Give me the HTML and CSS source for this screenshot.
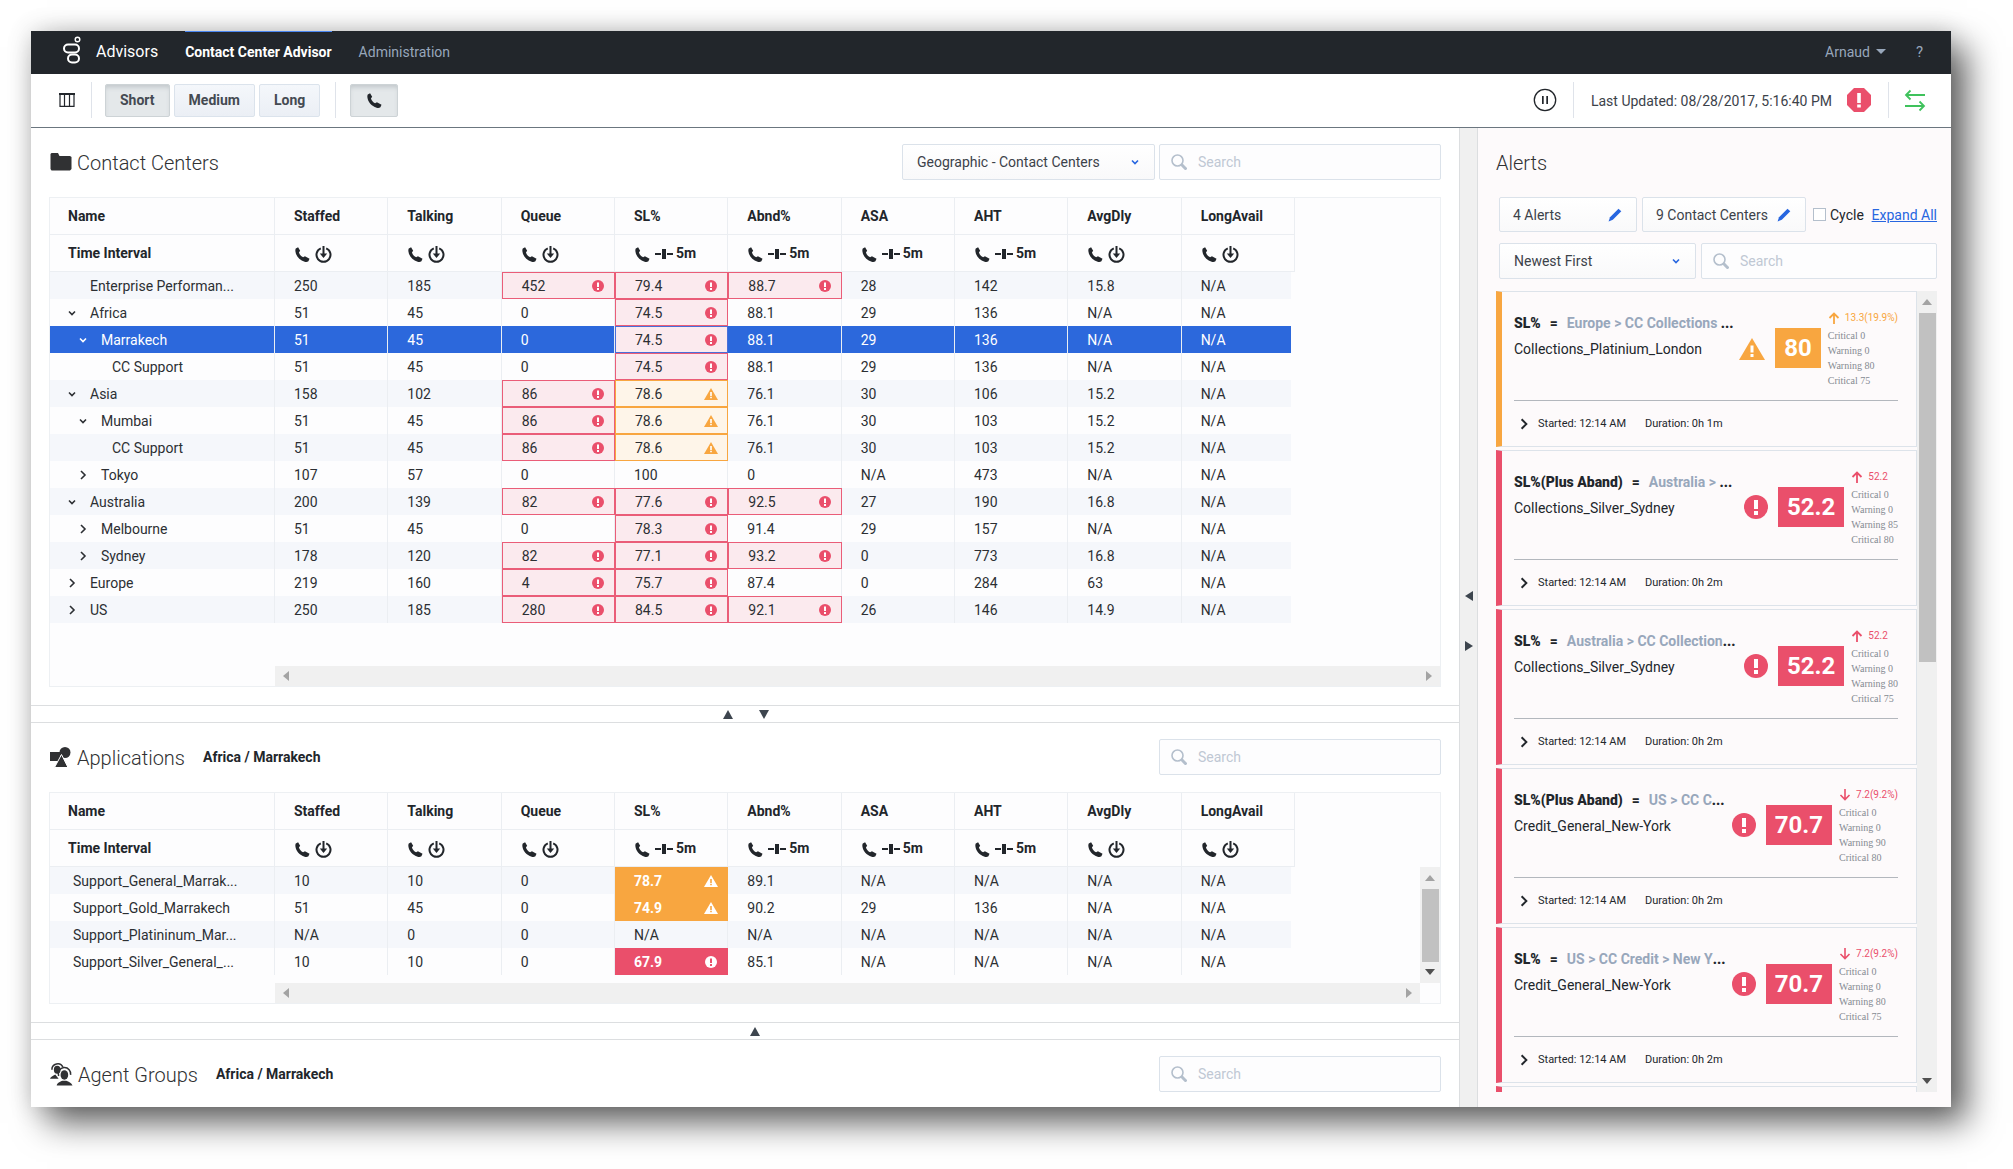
FILE: index.html
```html
<!DOCTYPE html>
<html lang="en">
<head>
<meta charset="utf-8">
<title>Contact Center Advisor</title>
<link rel="stylesheet" href="styles.css">
</head>
<body>
<svg class="sprite" aria-hidden="true">
  <symbol id="phone" viewBox="0 0 16 16"><path fill="currentColor" d="M.8 1.600 3.300.2l2.200 3.900-1.300 1.700c.7 2.300 2.300 4.100 4.400 5.100l2-1.100 4.900 2.600-1.200 2.800c-1 .8-2.400 1-4 .500C4.800 14 1 9.800.4 4.600c-.1-1.200 0-2.200.4-3z"/></symbol>
  <symbol id="timer" viewBox="0 0 17 17"><path fill="none" stroke="currentColor" stroke-width="2" d="M5.800 2.300A7 7 0 1 0 11.200 2.300"/><path fill="currentColor" d="M7.500 0h2v7.500h2.700L8.500 12 4.800 7.500h2.700z"/></symbol>
  <symbol id="span" viewBox="0 0 18 12"><path fill="currentColor" d="M0 5h6v2H0zM7 1h4v10H7zM12 5h6v2h-6z"/></symbol>
  <symbol id="crit" viewBox="0 0 12 12"><circle cx="6" cy="6" r="6" fill="#ea4f6b"/><path fill="#fff" d="M5 2.500h2v4.500H5zM5 8h2v2H5z"/></symbol>
  <symbol id="crit-inv" viewBox="0 0 12 12"><circle cx="6" cy="6" r="6" fill="#fff"/><path fill="#ea4f6b" d="M5 2.500h2v4.500H5zM5 8h2v2H5z"/></symbol>
  <symbol id="warn" viewBox="0 0 26 22"><path fill="#f8a640" d="M13 0 26 22H0z"/><path fill="#fff" d="M11.500 7.500h3v7h-3zM11.500 16h3v3h-3z"/></symbol>
  <symbol id="warn-inv" viewBox="0 0 26 22"><path fill="#fff" d="M13 0 26 22H0z"/><path fill="#f8a640" d="M11.500 7.500h3v7h-3zM11.500 16h3v3h-3z"/></symbol>
  <symbol id="down" viewBox="0 0 8 8"><path fill="none" stroke="currentColor" stroke-width="1.600" d="M1 2.500 4 5.500 7 2.500"/></symbol>
  <symbol id="right" viewBox="0 0 8 10"><path fill="none" stroke="currentColor" stroke-width="1.600" d="M2 1 6 5 2 9"/></symbol>
  <symbol id="search" viewBox="0 0 16 16"><circle cx="6.500" cy="6.500" r="5.500" fill="none" stroke="currentColor" stroke-width="1.600"/><path stroke="currentColor" stroke-width="3" d="m10.500 10.500 5 5"/></symbol>
  <symbol id="pencil" viewBox="0 0 14 14"><path fill="#2766e0" d="m10.500.7 2.800 2.600-8.500 8.500L.6 13.400l1.400-4.200z"/></symbol>
  <symbol id="up-arrow" viewBox="0 0 12 12"><path fill="none" stroke="currentColor" stroke-width="1.800" d="M6 12V1.500M1.500 6 6 1.500 10.500 6"/></symbol>
  <symbol id="down-arrow" viewBox="0 0 12 12"><path fill="none" stroke="currentColor" stroke-width="1.600" d="M6 0v10.500M1.500 6 6 10.500 10.500 6"/></symbol>
</svg>

<div class="app">
  <header class="navbar">
    <svg class="logo" width="18" height="28" viewBox="0 0 18 28" fill="none" stroke="#fff"><circle cx="14.500" cy="3.500" r="2.300" stroke-width="1.400"/><rect x="1" y="8.500" width="15" height="8" rx="4" stroke-width="2"/><rect x="5" y="18.500" width="11" height="8" rx="4" stroke-width="2"/></svg>
    <span class="brand">Advisors</span>
    <nav class="tabs">
      <a class="tab active" href="#cca">Contact Center Advisor</a>
      <a class="tab" href="#admin">Administration</a>
    </nav>
    <button class="user" type="button">Arnaud <span class="caret"></span></button>
    <button class="help" type="button" aria-label="Help">?</button>
  </header>

  <div class="toolbar">
    <button class="plain" type="button" aria-label="Columns"><svg width="16" height="14" viewBox="0 0 16 14"><path fill="none" stroke="#22262b" stroke-width="1.200" d="M1 1h14v12.300H1zM5.500 1v12M10.500 1v12"/><path fill="#22262b" d="M0 0h16v2H0z"/></svg></button>
    <span class="sep"></span>
    <div class="periods">
      <button class="btn pressed" type="button">Short</button>
      <button class="btn" type="button">Medium</button>
      <button class="btn" type="button">Long</button>
    </div>
    <span class="sep"></span>
    <button class="btn pressed call" type="button" aria-label="Voice"><svg width="15" height="15"><use href="#phone"/></svg></button>
    <button class="plain" type="button" aria-label="Pause"><svg width="24" height="24" viewBox="0 0 24 24"><circle cx="12" cy="12" r="10.700" fill="none" stroke="#22262b" stroke-width="1.300"/><path fill="#22262b" d="M9 8h1.700v8H9zM13.300 8H15v8h-1.700z"/></svg></button>
    <span class="sep"></span>
    <span class="updated">Last Updated: 08/28/2017, 5:16:40 PM</span>
    <svg class="octagon" width="24" height="24" viewBox="0 0 24 24"><path fill="#ea4f6b" d="M7 0h10l7 7v10l-7 7H7l-7-7V7z"/><path fill="#fff" d="M10.200 5h3.600v10h-3.600zM10.200 16.500h3.600v3h-3.600z"/></svg>
    <span class="sep"></span>
    <svg class="sync" width="22" height="22" viewBox="0 0 22 22" fill="none" stroke="#3fc25c" stroke-width="1.800"><path d="M21 6H2M6.500 1.500 2 6l4.500 4.500M1 17h19M15.500 12.500 20 17l-4.500 4.500"/></svg>
  </div>

  <div class="body">
    <main class="main">
      <section class="panel grow">
        <div class="panel-head">
          <svg class="panel-icon" width="22" height="18" viewBox="0 0 22 18"><path fill="#303133" d="M1.500 0H8l1.500 3H20l1.500 1v12L20 17.500H1.500L.5 16V1z"/></svg>
          <h2>Contact Centers</h2>
          <label class="select grouping"><select aria-label="Grouping"><option>Geographic - Contact Centers</option></select><svg width="8" height="8"><use href="#down"/></svg></label>
          <label class="search"><svg width="16" height="16"><use href="#search"/></svg><input type="text" placeholder="Search" aria-label="Search contact centers"></label>
        </div>
        <div class="grid">
          <div class="grid-head"><table class="data">
            <thead>
              <tr><th>Name</th><th>Staffed</th><th>Talking</th><th>Queue</th><th>SL%</th><th>Abnd%</th><th>ASA</th><th>AHT</th><th>AvgDly</th><th>LongAvail</th></tr>
              <tr><th>Time Interval</th>
                <th><svg class="ph"><use href="#phone"/></svg><svg class="tm"><use href="#timer"/></svg></th>
                <th><svg class="ph"><use href="#phone"/></svg><svg class="tm"><use href="#timer"/></svg></th>
                <th><svg class="ph"><use href="#phone"/></svg><svg class="tm"><use href="#timer"/></svg></th>
                <th><svg class="ph"><use href="#phone"/></svg><svg class="sp"><use href="#span"/></svg>5m</th>
                <th><svg class="ph"><use href="#phone"/></svg><svg class="sp"><use href="#span"/></svg>5m</th>
                <th><svg class="ph"><use href="#phone"/></svg><svg class="sp"><use href="#span"/></svg>5m</th>
                <th><svg class="ph"><use href="#phone"/></svg><svg class="sp"><use href="#span"/></svg>5m</th>
                <th><svg class="ph"><use href="#phone"/></svg><svg class="tm"><use href="#timer"/></svg></th>
                <th><svg class="ph"><use href="#phone"/></svg><svg class="tm"><use href="#timer"/></svg></th></tr>
            </thead>
            <tbody>
              <tr><td class="leaf0">Enterprise Performan...</td><td>250</td><td>185</td><td class="c">452<svg><use href="#crit"/></svg></td><td class="c">79.4<svg><use href="#crit"/></svg></td><td class="c">88.7<svg><use href="#crit"/></svg></td><td>28</td><td>142</td><td>15.8</td><td>N/A</td></tr>
              <tr><td class="l0"><button type="button" aria-label="Collapse"><svg><use href="#down"/></svg></button>Africa</td><td>51</td><td>45</td><td>0</td><td class="c">74.5<svg><use href="#crit"/></svg></td><td>88.1</td><td>29</td><td>136</td><td>N/A</td><td>N/A</td></tr>
              <tr class="selected"><td class="l1"><button type="button" aria-label="Collapse"><svg><use href="#down"/></svg></button>Marrakech</td><td>51</td><td>45</td><td>0</td><td class="c">74.5<svg><use href="#crit"/></svg></td><td>88.1</td><td>29</td><td>136</td><td>N/A</td><td>N/A</td></tr>
              <tr><td class="leaf2">CC Support</td><td>51</td><td>45</td><td>0</td><td class="c">74.5<svg><use href="#crit"/></svg></td><td>88.1</td><td>29</td><td>136</td><td>N/A</td><td>N/A</td></tr>
              <tr><td class="l0"><button type="button" aria-label="Collapse"><svg><use href="#down"/></svg></button>Asia</td><td>158</td><td>102</td><td class="c">86<svg><use href="#crit"/></svg></td><td class="w">78.6<svg><use href="#warn"/></svg></td><td>76.1</td><td>30</td><td>106</td><td>15.2</td><td>N/A</td></tr>
              <tr><td class="l1"><button type="button" aria-label="Collapse"><svg><use href="#down"/></svg></button>Mumbai</td><td>51</td><td>45</td><td class="c">86<svg><use href="#crit"/></svg></td><td class="w">78.6<svg><use href="#warn"/></svg></td><td>76.1</td><td>30</td><td>103</td><td>15.2</td><td>N/A</td></tr>
              <tr><td class="leaf2">CC Support</td><td>51</td><td>45</td><td class="c">86<svg><use href="#crit"/></svg></td><td class="w">78.6<svg><use href="#warn"/></svg></td><td>76.1</td><td>30</td><td>103</td><td>15.2</td><td>N/A</td></tr>
              <tr><td class="l1"><button type="button" aria-label="Expand"><svg><use href="#right"/></svg></button>Tokyo</td><td>107</td><td>57</td><td>0</td><td>100</td><td>0</td><td>N/A</td><td>473</td><td>N/A</td><td>N/A</td></tr>
              <tr><td class="l0"><button type="button" aria-label="Collapse"><svg><use href="#down"/></svg></button>Australia</td><td>200</td><td>139</td><td class="c">82<svg><use href="#crit"/></svg></td><td class="c">77.6<svg><use href="#crit"/></svg></td><td class="c">92.5<svg><use href="#crit"/></svg></td><td>27</td><td>190</td><td>16.8</td><td>N/A</td></tr>
              <tr><td class="l1"><button type="button" aria-label="Expand"><svg><use href="#right"/></svg></button>Melbourne</td><td>51</td><td>45</td><td>0</td><td class="c">78.3<svg><use href="#crit"/></svg></td><td>91.4</td><td>29</td><td>157</td><td>N/A</td><td>N/A</td></tr>
              <tr><td class="l1"><button type="button" aria-label="Expand"><svg><use href="#right"/></svg></button>Sydney</td><td>178</td><td>120</td><td class="c">82<svg><use href="#crit"/></svg></td><td class="c">77.1<svg><use href="#crit"/></svg></td><td class="c">93.2<svg><use href="#crit"/></svg></td><td>0</td><td>773</td><td>16.8</td><td>N/A</td></tr>
              <tr><td class="l0"><button type="button" aria-label="Expand"><svg><use href="#right"/></svg></button>Europe</td><td>219</td><td>160</td><td class="c">4<svg><use href="#crit"/></svg></td><td class="c">75.7<svg><use href="#crit"/></svg></td><td>87.4</td><td>0</td><td>284</td><td>63</td><td>N/A</td></tr>
              <tr><td class="l0"><button type="button" aria-label="Expand"><svg><use href="#right"/></svg></button>US</td><td>250</td><td>185</td><td class="c">280<svg><use href="#crit"/></svg></td><td class="c">84.5<svg><use href="#crit"/></svg></td><td class="c">92.1<svg><use href="#crit"/></svg></td><td>26</td><td>146</td><td>14.9</td><td>N/A</td></tr>
            </tbody>
          </table></div>
          <div class="hscroll"><i class="tri left"></i><i class="tri right"></i></div>
        </div>
      </section>

      <div class="hsplit"><button type="button" aria-label="Move up"><i class="tri up"></i></button><button type="button" aria-label="Move down"><i class="tri down"></i></button></div>

      <section class="panel">
        <div class="panel-head">
          <svg class="panel-icon" width="22" height="20" viewBox="0 0 22 20"><path fill="#303133" d="M0 5h10v9H0z"/><circle cx="15" cy="5.500" r="5.500" fill="#303133"/><path fill="#303133" stroke="#fff" d="M11.500 7.500 18 20.500H4.500z"/></svg>
          <h2>Applications</h2>
          <strong>Africa / Marrakech</strong>
          <label class="search"><svg width="16" height="16"><use href="#search"/></svg><input type="text" placeholder="Search" aria-label="Search applications"></label>
        </div>
        <div class="grid">
          <div class="with-vscroll">
          <div class="grid-head"><table class="data apps">
            <thead>
              <tr><th>Name</th><th>Staffed</th><th>Talking</th><th>Queue</th><th>SL%</th><th>Abnd%</th><th>ASA</th><th>AHT</th><th>AvgDly</th><th>LongAvail</th></tr>
              <tr><th>Time Interval</th>
                <th><svg class="ph"><use href="#phone"/></svg><svg class="tm"><use href="#timer"/></svg></th>
                <th><svg class="ph"><use href="#phone"/></svg><svg class="tm"><use href="#timer"/></svg></th>
                <th><svg class="ph"><use href="#phone"/></svg><svg class="tm"><use href="#timer"/></svg></th>
                <th><svg class="ph"><use href="#phone"/></svg><svg class="sp"><use href="#span"/></svg>5m</th>
                <th><svg class="ph"><use href="#phone"/></svg><svg class="sp"><use href="#span"/></svg>5m</th>
                <th><svg class="ph"><use href="#phone"/></svg><svg class="sp"><use href="#span"/></svg>5m</th>
                <th><svg class="ph"><use href="#phone"/></svg><svg class="sp"><use href="#span"/></svg>5m</th>
                <th><svg class="ph"><use href="#phone"/></svg><svg class="tm"><use href="#timer"/></svg></th>
                <th><svg class="ph"><use href="#phone"/></svg><svg class="tm"><use href="#timer"/></svg></th></tr>
            </thead>
            <tbody>
              <tr><td>Support_General_Marrak...</td><td>10</td><td>10</td><td>0</td><td class="wf">78.7<svg><use href="#warn-inv"/></svg></td><td>89.1</td><td>N/A</td><td>N/A</td><td>N/A</td><td>N/A</td></tr>
              <tr><td>Support_Gold_Marrakech</td><td>51</td><td>45</td><td>0</td><td class="wf">74.9<svg><use href="#warn-inv"/></svg></td><td>90.2</td><td>29</td><td>136</td><td>N/A</td><td>N/A</td></tr>
              <tr><td>Support_Platininum_Mar...</td><td>N/A</td><td>0</td><td>0</td><td>N/A</td><td>N/A</td><td>N/A</td><td>N/A</td><td>N/A</td><td>N/A</td></tr>
              <tr><td>Support_Silver_General_...</td><td>10</td><td>10</td><td>0</td><td class="cf">67.9<svg><use href="#crit-inv"/></svg></td><td>85.1</td><td>N/A</td><td>N/A</td><td>N/A</td><td>N/A</td></tr>
            </tbody>
          </table></div>
          <div class="vscroll inner"><i class="tri up"></i><span class="thumb"></span><i class="tri down"></i></div>
          </div>
          <div class="hscroll short"><i class="tri left"></i><i class="tri right"></i></div>
        </div>
      </section>

      <div class="hsplit single"><button type="button" aria-label="Move up"><i class="tri up"></i></button></div>

      <section class="panel last">
        <div class="panel-head">
          <svg class="panel-icon" width="23" height="24" viewBox="0 0 24 24"><g fill="none" stroke="#303133" stroke-width="1.600"><path d="M2 7.500A6 6 0 0 1 13.500 5"/><path d="M9 14A6.500 6.500 0 1 1 21.500 13"/></g><g fill="#303133"><ellipse cx="7.500" cy="7.500" rx="3.500" ry="4.200"/><path d="M0 17c.5-2 3-3 5.500-4.500L9 17z"/><ellipse cx="15" cy="13" rx="4" ry="5"/><path d="M7 24c.5-3 3.500-4 6-5h4c2.500 1 5.500 2 6.500 5z"/></g></svg>
          <h2>Agent Groups</h2>
          <strong>Africa / Marrakech</strong>
          <label class="search"><svg width="16" height="16"><use href="#search"/></svg><input type="text" placeholder="Search" aria-label="Search agent groups"></label>
        </div>
      </section>
    </main>

    <div class="vsplit"><button type="button" aria-label="Move left"><i class="tri left"></i></button><button type="button" aria-label="Move right"><i class="tri right"></i></button></div>

    <aside class="alerts">
      <h2>Alerts</h2>
      <div class="filters">
        <button class="edit alerts-count" type="button">4 Alerts<svg width="14" height="14"><use href="#pencil"/></svg></button>
        <button class="edit centers-count" type="button">9 Contact Centers<svg width="14" height="14"><use href="#pencil"/></svg></button>
        <label class="cycle"><input type="checkbox">Cycle</label>
        <a href="#expand">Expand All</a>
      </div>
      <div class="filters second">
        <label class="select order"><select aria-label="Order"><option>Newest First</option></select><svg width="8" height="8"><use href="#down"/></svg></label>
        <label class="search"><svg width="16" height="16"><use href="#search"/></svg><input type="text" placeholder="Search" aria-label="Search alerts"></label>
      </div>
      <div class="feed">
        <div class="cards">
          <article class="card warning">
            <div class="card-top">
              <div class="what"><p class="metric"><b>SL%</b><i>=</i><span>Europe &gt; CC Collections <b>...</b></span></p><p class="app-name">Collections_Platinium_London</p></div>
              <svg class="level" width="26" height="22"><use href="#warn"/></svg><span class="value">80</span>
              <div class="meta"><p class="delta"><svg width="12" height="12"><use href="#up-arrow"/></svg>13.3(19.9%)</p><p>Critical 0</p><p>Warning 0</p><p>Warning 80</p><p>Critical 75</p></div>
            </div>
            <p class="when"><button type="button" aria-label="Expand"><svg width="10" height="12"><use href="#right"/></svg></button><span>Started: 12:14 AM</span><span>Duration: 0h 1m</span></p>
          </article>
          <article class="card">
            <div class="card-top">
              <div class="what"><p class="metric"><b>SL%(Plus Aband)</b><i>=</i><span>Australia &gt; <b>...</b></span></p><p class="app-name">Collections_Silver_Sydney</p></div>
              <svg class="level" width="24" height="24"><use href="#crit"/></svg><span class="value">52.2</span>
              <div class="meta"><p class="delta"><svg width="12" height="12"><use href="#up-arrow"/></svg>52.2</p><p>Critical 0</p><p>Warning 0</p><p>Warning 85</p><p>Critical 80</p></div>
            </div>
            <p class="when"><button type="button" aria-label="Expand"><svg width="10" height="12"><use href="#right"/></svg></button><span>Started: 12:14 AM</span><span>Duration: 0h 2m</span></p>
          </article>
          <article class="card">
            <div class="card-top">
              <div class="what"><p class="metric"><b>SL%</b><i>=</i><span>Australia &gt; CC Collection<b>...</b></span></p><p class="app-name">Collections_Silver_Sydney</p></div>
              <svg class="level" width="24" height="24"><use href="#crit"/></svg><span class="value">52.2</span>
              <div class="meta"><p class="delta"><svg width="12" height="12"><use href="#up-arrow"/></svg>52.2</p><p>Critical 0</p><p>Warning 0</p><p>Warning 80</p><p>Critical 75</p></div>
            </div>
            <p class="when"><button type="button" aria-label="Expand"><svg width="10" height="12"><use href="#right"/></svg></button><span>Started: 12:14 AM</span><span>Duration: 0h 2m</span></p>
          </article>
          <article class="card">
            <div class="card-top">
              <div class="what"><p class="metric"><b>SL%(Plus Aband)</b><i>=</i><span>US &gt; CC C<b>...</b></span></p><p class="app-name">Credit_General_New-York</p></div>
              <svg class="level" width="24" height="24"><use href="#crit"/></svg><span class="value">70.7</span>
              <div class="meta"><p class="delta"><svg width="12" height="12"><use href="#down-arrow"/></svg>7.2(9.2%)</p><p>Critical 0</p><p>Warning 0</p><p>Warning 90</p><p>Critical 80</p></div>
            </div>
            <p class="when"><button type="button" aria-label="Expand"><svg width="10" height="12"><use href="#right"/></svg></button><span>Started: 12:14 AM</span><span>Duration: 0h 2m</span></p>
          </article>
          <article class="card">
            <div class="card-top">
              <div class="what"><p class="metric"><b>SL%</b><i>=</i><span>US &gt; CC Credit &gt; New Y<b>...</b></span></p><p class="app-name">Credit_General_New-York</p></div>
              <svg class="level" width="24" height="24"><use href="#crit"/></svg><span class="value">70.7</span>
              <div class="meta"><p class="delta"><svg width="12" height="12"><use href="#down-arrow"/></svg>7.2(9.2%)</p><p>Critical 0</p><p>Warning 0</p><p>Warning 80</p><p>Critical 75</p></div>
            </div>
            <p class="when"><button type="button" aria-label="Expand"><svg width="10" height="12"><use href="#right"/></svg></button><span>Started: 12:14 AM</span><span>Duration: 0h 2m</span></p>
          </article>
          <article class="card"></article>
        </div>
        <div class="vscroll"><i class="tri up"></i><span class="thumb long"></span><i class="tri down"></i></div>
      </div>
    </aside>
  </div>
</div>
</body>
</html>
```
FILE: styles.css
```css
* { box-sizing: border-box; }
body {
  margin: 0;
  padding: 31px 62px 62px 31px;
  background: #fff;
  color: #22262b;
  font: 14px/20px Roboto, "Liberation Sans", sans-serif;
}
h2, p { margin: 0; }
button, input, select { font: inherit; color: inherit; margin: 0; }
button { border: 0; background: none; padding: 0; }
svg { display: block; flex: none; overflow: visible; }
.sprite { display: none; }

.app {
  display: flex;
  flex-direction: column;
  height: calc(100vh - 93px);
  min-height: 1076px;
  background: #fff;
  box-shadow: 16px 16px 32px rgba(0, 0, 0, .6), 0 0 24px rgba(0, 0, 0, .16);
}

/* top navigation */
.navbar {
  display: flex;
  flex: none;
  height: 43px;
  padding: 0 28px 2px 32px;
  align-items: center;
  background: #22262b;
  color: #fff;
}
.logo { margin-bottom: 4px; }
.brand { margin-left: 15px; font-size: 16px; }
.tabs { display: flex; flex: 1; align-self: stretch; gap: 27px; margin-left: 27px; }
.tab { line-height: 40px; color: #98a7bb; text-decoration: none; border-top: 1px solid transparent; }
.tab.active { color: #fff; font-weight: 700; border-color: #4a86f0; }
.user, .help { color: #98a7bb; }
.user { display: flex; align-items: center; gap: 6px; }
.help { margin-left: 30px; font-size: 15px; }
.caret { border: 5px solid transparent; border-top-color: #98a7bb; border-bottom: 0; }

/* toolbar */
.toolbar {
  display: flex;
  flex: none;
  height: 54px;
  padding: 0 25px 1px 28px;
  align-items: center;
  border-bottom: 1px solid #6b767f;
}
.sep { width: 1px; height: 36px; background: #dfe3ea; }
.plain + .sep { margin-left: 16px; }
.periods { display: flex; gap: 4px; margin: 0 15px 0 13px; }
.btn {
  height: 33px;
  padding: 0 14px;
  border: 1px solid #dbe3ec;
  border-radius: 2px;
  background: linear-gradient(#f4f7fb, #ebeff5);
  color: #444a52;
  font-weight: 700;
}
.btn.pressed {
  border-color: #cdd3d6;
  background: #e4e8ea;
  box-shadow: inset 0 4px 5px -2px #bfc5c9;
}
.call { width: 48px; margin: 0 auto 0 14px; padding: 0 16px; color: #22262b; }
.updated { margin: 0 15px 0 14px; padding: 1px 0 0 3px; color: #3c424a; }
.octagon { margin-right: 17px; }
.sync { margin-left: 15px; }

/* body */
.body { display: flex; flex: 1; min-height: 0; }
.main { display: flex; flex: 1; flex-direction: column; min-width: 0; border-right: 1px solid #dcdee0; }
.panel { padding: 16px 18px 18px; }
.panel.grow { flex: 1; }
.panel.last { padding-bottom: 15px; }
.panel-head { display: flex; align-items: center; gap: 4px; height: 36px; margin-bottom: 17px; }
.panel-icon { margin-left: 1px; }
.panel-icon + h2 { flex: none; margin-left: 1px; }
h2 { padding-top: 1px; font-size: 20px; font-weight: 300; line-height: 26px; color: #303133; }
.panel-head .search { width: 282px; }
.panel-head strong { margin: 0 auto 0 14px; }
.grouping { width: 253px; margin-left: auto; }
.select, .search {
  display: flex;
  height: 36px;
  align-items: center;
  border: 1px solid #dbe2ea;
  border-radius: 2px;
  background: #fdfdfe;
}
.select { padding: 0 15px 0 14px; background: linear-gradient(#fff, #f9f9fa); color: #3c424a; }
.select select { flex: 1; min-width: 0; padding: 0; border: 0; background: none; appearance: none; }
.select svg { color: #2766e0; }
.search { gap: 11px; padding: 0 11px; color: #b4bfcc; }
.search input { flex: 1; min-width: 0; padding: 0; border: 0; background: none; }
.search input::placeholder { color: #c0c8d4; opacity: 1; }

/* data grids */
.grid { display: flex; flex-direction: column; border: 1px solid #edf0f3; background: #fdfdfe; }
.grow .grid { height: 490px; }
.grow .grid .grid-head { flex: 1; }
.data { width: 1245px; table-layout: fixed; border-collapse: separate; border-spacing: 0; }
.data th:first-child { width: 225px; }
.data th, .data td { padding: 0 10px 0 19px; text-align: left; white-space: nowrap; border-right: 1px solid #ebeef2; }
.data th:first-child { padding-left: 18px; }
.data th { height: 37px; border-bottom: 1px solid #ebeef2; }
.data th svg { display: inline-block; vertical-align: middle; }
.data th .ph { width: 15px; height: 15px; margin: 0 5px 0 1px; }
.data th .tm { width: 17px; height: 17px; }
.data th .sp { width: 18px; height: 12px; margin-right: 3px; }
.data td { height: 27px; color: #2c2f33; }
.data td:last-child { border-right: 4px solid #fdfdfe; }
.data tbody tr:nth-child(odd) td { background: #f5f7fb; }
.data td > svg { float: right; width: 12px; height: 12px; margin-top: 4px; }
.data td button { float: left; width: 8px; height: 20px; margin-right: 14px; }
.data td button svg { width: 8px; height: 10px; }
.data .l0 { padding-left: 18px; }
.data .l1 { padding-left: 29px; }
.data .leaf0 { padding-left: 40px; }
.data .leaf2 { padding-left: 62px; }
.data tbody tr.selected td { background: #2c68dc; color: #fff; }
.data tbody tr td.c, .data tbody tr td.w { border: 1px solid #ea5d78; background: #fbeaee; color: #2c2f33; }
.data tbody tr td.w { border-color: #f8a640; background: #fef5e9; }
.data .w > svg, .data .wf > svg { width: 14px; height: 12px; margin-right: -1px; }
.data tbody tr.selected td.c { border-color: #4a6fd8; }
.data.apps td:first-child { padding-left: 23px; }
.data tbody tr td.wf, .data tbody tr td.cf { background: #f8a640; border-color: #f8a640; color: #fff; font-weight: 700; }
.data tbody tr td.cf { background: #ea4f6b; border-color: #ea4f6b; }

/* scroll tracks */
.hscroll { display: flex; justify-content: space-between; align-items: center; height: 20px; margin-left: 225px; padding: 0 8px; background: #f0f0f0; }
.hscroll.short { margin-right: 20px; }
.with-vscroll { display: flex; height: 190px; overflow: hidden; }
.with-vscroll .grid-head { flex: 1; min-width: 0; }
.vscroll { display: flex; flex-direction: column; flex: none; width: 20px; padding: 8px 0; align-items: center; justify-content: space-between; background: #f0f0f0; }
.vscroll.inner { margin-top: 74px; }
.thumb { width: 17px; height: 73px; margin: 8px 0 auto; background: #c1c1c1; }
.thumb.long { height: 349px; }
.tri { display: block; width: 0; height: 0; border: 5px solid transparent; }
.tri.up { border-width: 0 5px 6px; border-bottom-color: #a3a3a3; }
.tri.down { border-width: 6px 5px 0; border-top-color: #505050; }
.tri.left { border-width: 5px 6px 5px 0; border-right-color: #a3a3a3; }
.tri.right { border-width: 5px 0 5px 6px; border-left-color: #a3a3a3; }

/* splitters */
.hsplit { display: flex; flex: none; height: 18px; padding-left: 2px; justify-content: center; align-items: center; gap: 26px; border: solid #dcdee0; border-width: 1px 0; }
.hsplit.single { padding-left: 20px; }
.hsplit .tri.up { border-width: 0 5px 9px; border-bottom-color: #3d454e; }
.hsplit .tri.down { border-width: 9px 5px 0; border-top-color: #3d454e; }
.vsplit { display: flex; flex: none; flex-direction: column; width: 18px; padding-top: 6px; justify-content: center; align-items: center; gap: 40px; background: #f0f0f0; border-right: 1px solid #dcdee0; }
.vsplit .tri.left { border-width: 5px 8px 5px 0; border-right-color: #3d454e; }
.vsplit .tri.right { border-width: 5px 0 5px 8px; border-left-color: #3d454e; }

/* alerts */
.alerts { display: flex; flex: none; flex-direction: column; width: 473px; padding: 21px 14px 15px 18px; background: #fdfafb; }
.filters { display: flex; align-items: center; gap: 5px; margin: 21px 0 0 3px; }
.filters.second { margin: 11px 0 12px 3px; }
.edit {
  display: flex;
  height: 35px;
  padding: 0 14px 0 13px;
  align-items: center;
  justify-content: space-between;
  border: 1px solid #dbe2ea;
  border-radius: 2px;
  background: linear-gradient(#fff, #f9f9fa);
  color: #3c424a;
}
.alerts-count { width: 138px; }
.centers-count { width: 164px; }
.cycle { display: flex; align-items: center; gap: 4px; margin-left: 2px; }
.cycle input { appearance: none; width: 13px; height: 13px; border: 1px solid #b4bfcc; background: #fff; }
.filters a { margin-left: auto; color: #2766e0; }
.order { width: 197px; }
.filters .search { flex: 1; }
.feed { display: flex; flex: 1; min-height: 0; }
.cards { flex: 1; min-width: 0; overflow: hidden; }
.card { height: 156px; margin-bottom: 3px; padding: 21px 18px 0 12px; border: 1px solid #dde3ea; border-left: 6px solid #ea4f6b; }
.card.warning { border-left-color: #f8a640; }
.card-top { display: flex; height: 88px; border-bottom: 1px solid #b3b7bd; }
.what { flex: 1; min-width: 0; }
.metric { display: flex; gap: 9px; font-weight: 700; white-space: nowrap; }
.metric i { font-style: normal; }
.metric span { color: #98a7bb; }
.metric span b { color: #22262b; }
.app-name { margin-top: 6px; }
.level { margin-top: 23px; }
.warning .level { margin-top: 25px; }
.value { height: 40px; margin: 15px 7px 0 10px; padding: 0 9px; background: #ea4f6b; color: #fff; font-size: 24px; font-weight: 700; line-height: 41px; }
.warning .value { background: #f8a640; }
.meta { margin-top: -4px; color: #858a92; font: 10px/15px "Liberation Serif", serif; }
.meta .delta { display: flex; gap: 5px; height: 17px; margin-bottom: 2px; align-items: center; color: #ea4f6b; font: 10px/15px Roboto, sans-serif; }
.warning .delta { color: #f8a640; }
.when { display: flex; align-items: center; gap: 19px; padding: 13px 0 0 5px; font-size: 11px; }
.when button + span { margin-left: -10px; }
```
